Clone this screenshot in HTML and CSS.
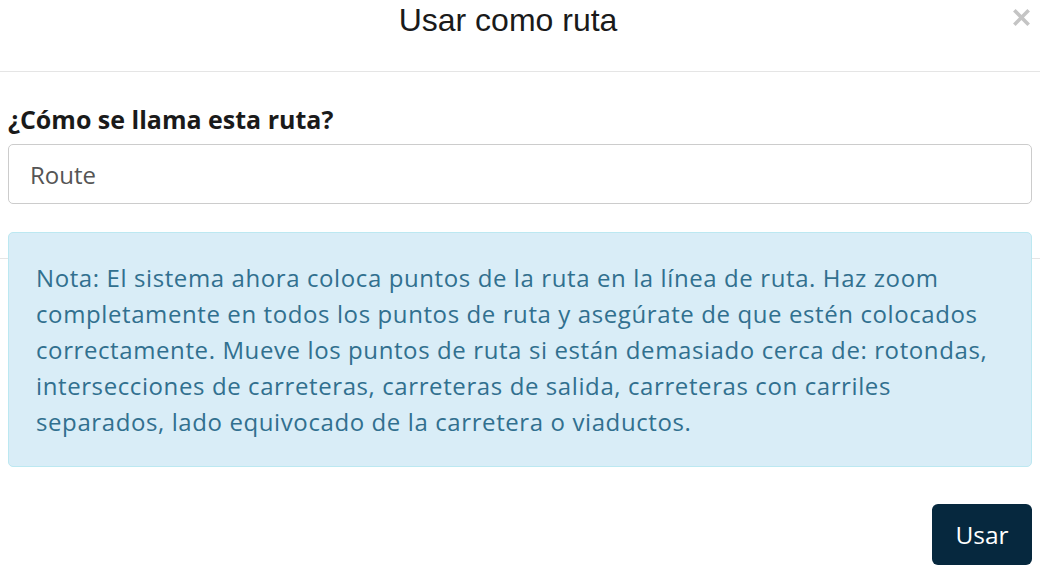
FILE: index.html
```html
<!DOCTYPE html>
<html lang="es">
<head>
  <meta charset="UTF-8">
  <meta name="viewport" content="width=device-width, initial-scale=1.0">
  <title>Usar como ruta</title>
  <link rel="stylesheet" href="styles.css">
</head>
<body>
  <div class="modal">
    <div class="modal-header">
      <h4 class="modal-title">Usar como ruta</h4>
      <button class="close" type="button" aria-label="Cerrar">
        <svg width="17" height="17" viewBox="0 0 17 17">
          <path d="M2.6 2.6 L14.4 14.4 M14.4 2.6 L2.6 14.4" stroke="#c4c4c4" stroke-width="3.6" stroke-linecap="square"/>
        </svg>
      </button>
    </div>

    <div class="modal-body">
      <label for="routeName">¿Cómo se llama esta ruta?</label>
      <input type="text" id="routeName" value="Route">

      <div class="alert alert-info">
        Nota: El sistema ahora coloca puntos de la ruta en la línea de ruta. Haz zoom<br>
        completamente en todos los puntos de ruta y asegúrate de que estén colocados<br>
        correctamente. Mueve los puntos de ruta si están demasiado cerca de: rotondas,<br>
        intersecciones de carreteras, carreteras de salida, carreteras con carriles<br>
        separados, lado equivocado de la carretera o viaductos.
      </div>
    </div>

    <div class="modal-footer">
      <button class="btn-primary" type="button">Usar</button>
    </div>
  </div>
</body>
</html>
```

FILE: styles.css
```css
* {
  box-sizing: border-box;
}
body {
  margin: 0;
  font-family: "Open Sans", "DejaVu Sans", sans-serif;
  background: #fff;
  color: #1a1a1a;
}
.modal {
  width: 1040px;
}
.modal-header {
  display: flex;
  align-items: flex-start;
  height: 72px;
  padding: 0 8px;
  border-bottom: 1px solid #e5e5e5;
}
.modal-title {
  flex: 1;
  margin: 0;
  padding-top: 2px;
  font-family: "Liberation Sans", Arial, sans-serif;
  font-weight: normal;
  font-size: 32px;
  line-height: 36px;
  text-align: center;
  color: #1a1a1a;
}
.close {
  width: 24px;
  height: 24px;
  margin-top: 5px;
  padding: 0;
  border: none;
  background: none;
  cursor: pointer;
}
.close svg {
  display: block;
  margin-left: 5px;
}
.modal-body {
  height: 187px;
  padding: 32px 8px 0;
  border-bottom: 1px solid #e5e5e5;
}
label {
  display: block;
  font-size: 25px;
  line-height: 30px;
  font-weight: bold;
  color: #1a1a1a;
}
input {
  display: block;
  width: 100%;
  height: 60px;
  margin-top: 10px;
  padding: 0 21px;
  font-family: "Open Sans", sans-serif;
  font-size: 24px;
  color: #555;
  border: 1px solid #ccc;
  border-radius: 5px;
}
.alert {
  margin-top: 28px;
  padding: 27px 8px 26px 27px;
  border: 1px solid #bce8f1;
  border-radius: 5px;
  font-size: 24px;
  letter-spacing: 0.6px;
  line-height: 36px;
  white-space: nowrap;
}
.alert-info {
  background-color: #d9edf7;
  color: #31708f;
}
.modal-footer {
  display: flex;
  justify-content: flex-end;
  padding: 245px 8px 0;
}
.btn-primary {
  width: 100px;
  height: 61px;
  padding: 0;
  font-family: "Open Sans", sans-serif;
  font-size: 24.5px;
  color: #fff;
  background-color: #06283e;
  border: none;
  border-radius: 6px;
  cursor: pointer;
}
```
